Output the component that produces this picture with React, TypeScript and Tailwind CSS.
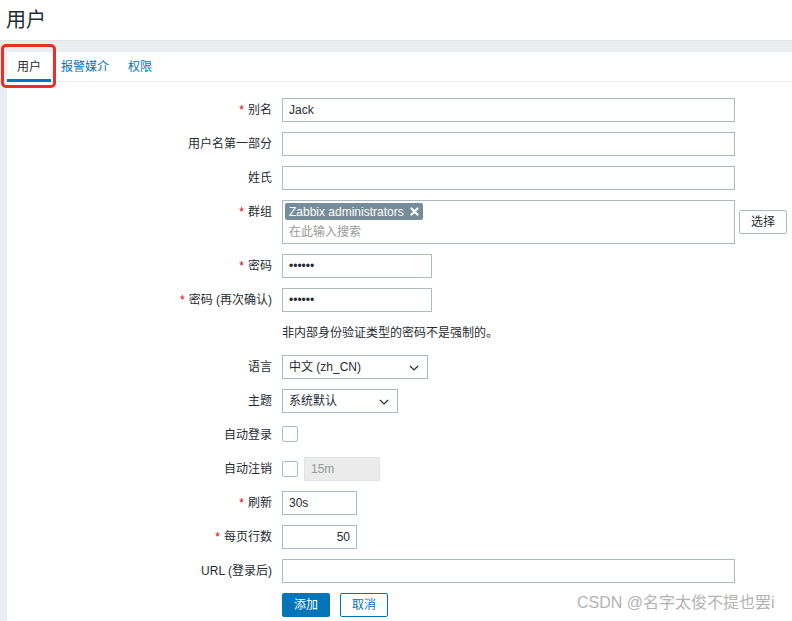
import React from "react";

const font = "font-['Liberation_Sans','Noto_Sans_CJK_SC',sans-serif]";

function Label({ text, required }: { text: string; required?: boolean }) {
  return (
    <div className="w-[265px] shrink-0 h-[24px] flex items-center justify-end">
      {required && <span className="text-[#d40000] mr-[4px]">*</span>}
      <span>{text}</span>
    </div>
  );
}

function Row({ label, required, children }: { label: string; required?: boolean; children?: React.ReactNode }) {
  return (
    <div className="flex items-start">
      <Label text={label} required={required} />
      <div className="ml-[10px] flex items-center gap-[6px]">{children}</div>
    </div>
  );
}

function Chevron() {
  return (
    <svg width="10" height="6" viewBox="0 0 10 6" className="absolute right-[8px] top-[9px]">
      <path d="M1 1 L5 5 L9 1" fill="none" stroke="#1f2c33" strokeWidth="1.2" />
    </svg>
  );
}

const inputCls =
  "h-[24px] border border-[#acbbc2] bg-white px-[6px] text-[12px] text-[#1f2c33] outline-none";

export default function App() {
  return (
    <div className={`relative w-[792px] h-[621px] overflow-hidden bg-white text-[12px] text-[#1f2c33] ${font}`}>
      {/* title */}
      <div className="h-[40px] flex items-center px-[6px]">
        <h1 className="text-[20px] leading-none">用户</h1>
      </div>

      <div className="h-[581px] bg-[#ebeef0] border-t border-[#dfe4e7] pt-[11px] pl-[7px]">
        <div className="h-full bg-white">
          {/* tabs */}
          <div className="h-[30px] flex border-b border-[#ebeef0]">
            <div className="relative px-[10px] flex items-center pt-[1px]">
              <span>用户</span>
              <div className="absolute left-0 right-0 bottom-[-1px] h-[3px] bg-[#0275b8]" />
            </div>
            <div className="px-[10px] flex items-center pt-[1px] text-[#0275b8]">报警媒介</div>
            <div className="px-[9px] flex items-center pt-[1px] text-[#0275b8]">权限</div>
          </div>

          {/* form */}
          <div className="pt-[16px] flex flex-col gap-[10px]">
            <Row label="别名" required>
              <input className={`${inputCls} w-[453px]`} defaultValue="Jack" />
            </Row>
            <Row label="用户名第一部分">
              <input className={`${inputCls} w-[453px]`} />
            </Row>
            <Row label="姓氏">
              <input className={`${inputCls} w-[453px]`} />
            </Row>
            <Row label="群组" required>
              <div className="w-[453px] h-[44px] border border-[#acbbc2] bg-white p-[2px] flex flex-col">
                <div className="flex">
                  <span className="h-[17px] bg-[#768d99] text-white pl-[4px] pr-[4px] flex items-center gap-[6px] rounded-[2px]">
                    Zabbix administrators
                    <svg width="9" height="9" viewBox="0 0 9 9">
                      <path d="M1.5 1.5 L7.5 7.5 M7.5 1.5 L1.5 7.5" stroke="white" strokeWidth="2.2" strokeLinecap="round" />
                    </svg>
                  </span>
                </div>
                <div className="pl-[4px] mt-[3px] text-[#999999]">在此输入搜索</div>
              </div>
              <button className="h-[24px] w-[48px] border border-[#acbbc2] bg-white rounded-[2px] text-[#1f2c33] -ml-[2px]">
                选择
              </button>
            </Row>
            <Row label="密码" required>
              <input type="password" className={`${inputCls} w-[150px]`} defaultValue="123456" />
            </Row>
            <Row label="密码 (再次确认)" required>
              <input type="password" className={`${inputCls} w-[150px]`} defaultValue="123456" />
            </Row>
            <div className="flex items-start">
              <div className="w-[265px] shrink-0" />
              <div className="ml-[10px] h-[24px] flex items-center -mt-[1px]">非内部身份验证类型的密码不是强制的。</div>
            </div>
            <Row label="语言">
              <div className={`${inputCls} relative w-[146px] flex items-center`}>
                中文 (zh_CN)
                <Chevron />
              </div>
            </Row>
            <Row label="主题">
              <div className={`${inputCls} relative w-[116px] flex items-center`}>
                系统默认
                <Chevron />
              </div>
            </Row>
            <Row label="自动登录">
              <div className="w-[16px] h-[16px] border border-[#acbbc2] bg-white rounded-[2px] mt-[3px]" />
            </Row>
            <Row label="自动注销">
              <div className="w-[16px] h-[16px] border border-[#acbbc2] bg-white rounded-[2px]" />
              <div className="h-[24px] w-[76px] border border-[#dfe4e7] bg-[#ebebeb] px-[6px] flex items-center text-[#999999]">
                15m
              </div>
            </Row>
            <Row label="刷新" required>
              <input className={`${inputCls} w-[75px]`} defaultValue="30s" />
            </Row>
            <Row label="每页行数" required>
              <input className={`${inputCls} w-[75px] text-right`} defaultValue="50" />
            </Row>
            <Row label="URL (登录后)">
              <input className={`${inputCls} w-[453px]`} />
            </Row>
            <div className="flex">
              <div className="w-[265px] shrink-0" />
              <div className="ml-[10px] flex gap-[10px]">
                <button className="h-[24px] w-[48px] bg-[#0275b8] text-white rounded-[2px]">添加</button>
                <button className="h-[24px] w-[48px] border border-[#0275b8] bg-white text-[#0275b8] rounded-[2px]">
                  取消
                </button>
              </div>
            </div>
          </div>
        </div>
      </div>

      {/* annotation highlight */}
      <div className="absolute left-[1px] top-[44px] w-[55px] h-[44px] border-[3px] border-[#e8302a] rounded-[5px]" />

      {/* watermark */}
      <div className="absolute left-[577px] top-[593px] text-[16px] text-[#b3b3b3] leading-[20px] whitespace-nowrap">
        CSDN @名字太俊不提也罢i
      </div>
    </div>
  );
}
